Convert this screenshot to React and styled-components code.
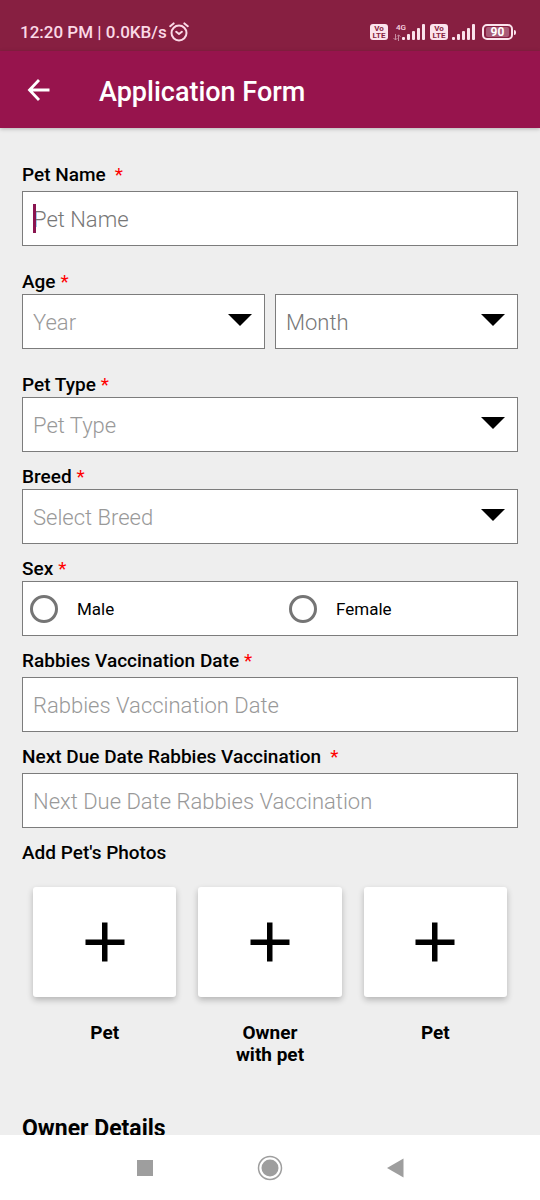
import React from "react";
import styled, { createGlobalStyle } from "styled-components";

const GlobalStyle = createGlobalStyle`
  *, *::before, *::after { box-sizing: border-box; }
  body {
    margin: 0;
    background: #eeeeee;
    color: #000;
    font-family: Roboto, "Liberation Sans", sans-serif;
  }
  button, input, select { font-family: inherit; }
`;

const Screen = styled.div`
  display: flex;
  flex-direction: column;
  height: 100vh;
  background: #eeeeee;
`;

/* ---------- status bar ---------- */

const StatusBar = styled.div`
  flex: none;
  display: flex;
  align-items: center;
  justify-content: space-between;
  height: 51px;
  padding: 13px 24px 0 20px;
  background: #871f41;
  color: #fbd9e6;
`;

const StatusGroup = styled.div`
  display: flex;
  align-items: center;
  gap: ${(p) => p.$gap}px;
`;

const StatusText = styled.span`
  font-size: 17px;
  line-height: 20px;
  font-weight: 500;
`;

const VolteBadge = styled.span`
  display: flex;
  flex-direction: column;
  align-items: center;
  justify-content: center;
  width: 18px;
  height: 16px;
  border-radius: 3px;
  background: #fbe3ec;
  color: #871f41;
  font-size: 8px;
  line-height: 7px;
  font-weight: 700;
`;

const SignalGroup = styled.div`
  display: flex;
  align-items: flex-end;
`;

const NetworkType = styled.div`
  display: flex;
  flex-direction: column;
  align-items: flex-start;
  gap: 2px;
  margin-right: -4px;
  font-size: 8px;
  line-height: 8px;
  font-weight: 500;
  span { padding-left: 4px; }
  svg { margin-left: 1px; }
`;

const Battery = styled.span`
  display: flex;
  align-items: center;
  gap: 1px;
  margin-left: 2px;
  &::after {
    content: "";
    width: 2px;
    height: 5px;
    border-radius: 0 2px 2px 0;
    background: #fbe3ec;
  }
`;

const BatteryBody = styled.span`
  display: flex;
  width: 31px;
  height: 16px;
  padding: 1px 2px;
  border: 2px solid #fbe3ec;
  border-radius: 5px;
`;

const BatteryLevel = styled.span`
  flex: 1;
  border-radius: 2px;
  background: #a85a76;
  color: #fff;
  font-size: 12px;
  line-height: 10px;
  font-weight: 700;
  text-align: center;
`;

/* ---------- app bar ---------- */

const AppBar = styled.header`
  flex: none;
  z-index: 1;
  display: flex;
  align-items: center;
  gap: 48px;
  height: 77px;
  padding: 0 26px;
  background: #97144d;
  color: #fff;
  box-shadow: 0 1px 4px rgba(0, 0, 0, 0.25);
`;

const BackButton = styled.button`
  display: flex;
  padding: 0;
  border: 0;
  background: none;
  color: inherit;
`;

const Title = styled.h1`
  margin: 0;
  padding-top: 4px;
  font-size: 27px;
  line-height: 32px;
  font-weight: 500;
`;

/* ---------- form ---------- */

const Content = styled.main`
  flex: 1;
  min-height: 0;
  overflow-y: auto;
  scrollbar-width: none;
`;

const Form = styled.form`
  display: flex;
  flex-direction: column;
  padding: 37px 22px 24px;
`;

const Field = styled.div`
  display: flex;
  flex-direction: column;
  gap: ${(p) => (p.$loose ? 6 : 2)}px;
  margin-bottom: ${(p) => (p.$spaced ? 26 : 15)}px;
`;

const Group = styled.fieldset`
  display: contents;
`;

const labelText = `
  padding: 0;
  margin: 0;
  font-size: 19px;
  line-height: 20px;
  font-weight: 500;
`;

const Label = styled.label`
  ${labelText}
`;

const Legend = styled.div`
  ${labelText}
`;

const Star = styled.span`
  margin-left: ${(p) => (p.$wide ? 9 : 5)}px;
  color: #f00;
  font-weight: 400;
`;

const Row = styled.div`
  display: grid;
  grid-template-columns: 1fr 1fr;
  gap: 10px;
`;

const Control = styled.div`
  position: relative;
  display: flex;
`;

const boxStyle = `
  width: 100%;
  height: 55px;
  border: 1px solid #7c7c7c;
  border-radius: 0;
  background: #fff;
`;

const TextInput = styled.input`
  ${boxStyle}
  padding: 2px 10px 0;
  font-size: 22px;
  font-weight: 350;
  outline: none;
  &::placeholder {
    color: ${(p) => (p.$dark ? "#777" : "#999")};
    opacity: 1;
  }
`;

const Caret = styled.span`
  position: absolute;
  left: 11px;
  top: 13px;
  width: 3px;
  height: 29px;
  background: #8a1550;
`;

const Select = styled.select`
  ${boxStyle}
  appearance: none;
  padding: 2px 40px 0 10px;
  color: ${(p) => (p.$dark ? "#777" : "#999")};
  font-size: 22px;
  font-weight: 350;
  outline: none;
`;

const Arrow = styled.svg`
  position: absolute;
  right: 13px;
  top: 20px;
  pointer-events: none;
`;

const RadioBox = styled.div`
  ${boxStyle}
  display: grid;
  grid-template-columns: 1fr 1fr;
  gap: 24px;
  align-items: center;
`;

const RadioLabel = styled.label`
  display: flex;
  align-items: center;
  gap: 19px;
  padding-left: 7px;
  font-size: 17px;
  line-height: 20px;
`;

const Radio = styled.input`
  appearance: none;
  width: 28px;
  height: 28px;
  margin: 0;
  border: 3px solid #757575;
  border-radius: 50%;
  &:checked {
    background: radial-gradient(#97144d 50%, #fff 55%);
  }
`;

const Photos = styled.div`
  display: grid;
  grid-template-columns: repeat(3, 1fr);
  gap: 22px;
  padding: 24px 11px 0;
`;

const Photo = styled.div`
  display: flex;
  flex-direction: column;
  align-items: center;
  gap: 25px;
`;

const PhotoButton = styled.button`
  display: flex;
  align-items: center;
  justify-content: center;
  width: 100%;
  height: 110px;
  padding: 0;
  border: 0;
  border-radius: 3px;
  background: #fff;
  box-shadow: 0 3px 6px rgba(0, 0, 0, 0.24);
`;

const Caption = styled.span`
  max-width: 80px;
  font-size: 19px;
  line-height: 22px;
  font-weight: 700;
  text-align: center;
`;

const SectionTitle = styled.h2`
  margin: 49px 0 0;
  font-size: 23px;
  line-height: 28px;
  font-weight: 700;
`;

/* ---------- navigation bar ---------- */

const NavBar = styled.nav`
  flex: none;
  display: grid;
  grid-template-columns: repeat(3, 125px);
  justify-content: center;
  height: 65px;
  background: #fff;
`;

const NavButton = styled.button`
  display: flex;
  align-items: center;
  justify-content: center;
  padding: 0;
  border: 0;
  background: none;
`;

function AlarmIcon() {
  return (
    <svg width="20" height="20" viewBox="0 0 20 20" fill="none" stroke="currentColor" strokeWidth="2" strokeLinecap="round" strokeLinejoin="round" aria-hidden="true">
      <circle cx="10" cy="11" r="7.5" />
      <path d="M7.2 9.800 10 12 12.900 9.800M1.2 4.2 4.6 1.4M18.8 4.2 15.4 1.4" />
    </svg>
  );
}

function Bars() {
  return (
    <svg width="24" height="17" viewBox="0 0 24 17" fill="#fbe3ec" aria-hidden="true">
      <rect x="0" y="13" width="3" height="3" rx="1" />
      <rect x="5" y="10" width="3" height="6" rx="1" />
      <rect x="10" y="7" width="3" height="9" rx="1" />
      <rect x="15" y="4" width="3" height="12" rx="1" />
      <rect x="20" y="0" width="3" height="16" rx="1" />
    </svg>
  );
}

function Volte() {
  return (
    <VolteBadge>
      <span>Vo</span>
      <span>LTE</span>
    </VolteBadge>
  );
}

function Required({ wide }) {
  return <Star $wide={wide}>*</Star>;
}

function TextField({ id, label, loose, spaced, wide, dark, caret }) {
  return (
    <Field $loose={loose} $spaced={spaced}>
      <Label htmlFor={id}>
        {label}
        <Required wide={wide} />
      </Label>
      <Control>
        <TextInput id={id} type="text" placeholder={label} $dark={dark} />
        {caret && <Caret />}
      </Control>
    </Field>
  );
}

function DropDown({ id, name, text, dark }) {
  return (
    <Control>
      <Select id={id} aria-label={name} $dark={dark}>
        <option>{text}</option>
      </Select>
      <Arrow width="24" height="12" viewBox="0 0 24 12" aria-hidden="true">
        <path d="M0 0h24L12 12z" />
      </Arrow>
    </Control>
  );
}

function PhotoTile({ caption }) {
  return (
    <Photo>
      <PhotoButton type="button" aria-label={`Add photo: ${caption}`}>
        <svg width="40" height="40" viewBox="0 0 40 40" aria-hidden="true">
          <path d="M17 .5h5.500v17h17v5.500h-17v16.500h-5.500v-16.500H.5v-5.500h16.500z" />
        </svg>
      </PhotoButton>
      <Caption>{caption}</Caption>
    </Photo>
  );
}

export default function App() {
  return (
    <Screen>
      <GlobalStyle />
      <StatusBar>
        <StatusGroup $gap={2}>
          <StatusText>12:20 PM | 0.0KB/s</StatusText>
          <AlarmIcon />
        </StatusGroup>
        <StatusGroup $gap={4}>
          <Volte />
          <SignalGroup>
            <NetworkType>
              <span>4G</span>
              <svg width="8" height="7" viewBox="0 0 8 7" fill="none" stroke="#c58a9f" aria-hidden="true">
                <path d="M2.5 0v6M.5 4l2 2 2-2M5.5 7V1M4 2.5 5.500 1 7.500 2.500" />
              </svg>
            </NetworkType>
            <Bars />
          </SignalGroup>
          <Volte />
          <Bars />
          <Battery>
            <BatteryBody>
              <BatteryLevel>90</BatteryLevel>
            </BatteryBody>
          </Battery>
        </StatusGroup>
      </StatusBar>

      <AppBar>
        <BackButton type="button" aria-label="Back">
          <svg width="25" height="24" viewBox="0 0 25 24" fill="none" stroke="currentColor" strokeWidth="2.8" aria-hidden="true">
            <path d="M23.500 12H4M13 2 3.500 12 13 22" />
          </svg>
        </BackButton>
        <Title>Application Form</Title>
      </AppBar>

      <Content>
        <Form>
          <TextField id="pet-name" label="Pet Name" loose spaced wide dark caret />

          <Field $spaced>
            <Label htmlFor="age-year">
              Age
              <Required />
            </Label>
            <Row>
              <DropDown id="age-year" name="Age, year" text="Year" />
              <DropDown id="age-month" name="Age, month" text="Month" dark />
            </Row>
          </Field>

          <Field>
            <Label htmlFor="pet-type">
              Pet Type
              <Required />
            </Label>
            <DropDown id="pet-type" text="Pet Type" />
          </Field>

          <Field>
            <Label htmlFor="breed">
              Breed
              <Required />
            </Label>
            <DropDown id="breed" text="Select Breed" />
          </Field>

          <Group aria-labelledby="sex-label">
            <Field>
              <Legend id="sex-label">
                Sex
                <Required />
              </Legend>
              <RadioBox>
                <RadioLabel>
                  <Radio type="radio" name="sex" value="male" />
                  Male
                </RadioLabel>
                <RadioLabel>
                  <Radio type="radio" name="sex" value="female" />
                  Female
                </RadioLabel>
              </RadioBox>
            </Field>
          </Group>

          <TextField id="vaccination" label="Rabbies Vaccination Date" loose />
          <TextField id="next-due" label="Next Due Date Rabbies Vaccination" loose wide />

          <Legend>Add Pet's Photos</Legend>
          <Photos>
            <PhotoTile caption="Pet" />
            <PhotoTile caption="Owner with pet" />
            <PhotoTile caption="Pet" />
          </Photos>

          <SectionTitle>Owner Details</SectionTitle>
        </Form>
      </Content>

      <NavBar>
        <NavButton type="button" aria-label="Recent apps">
          <svg width="16" height="16" aria-hidden="true">
            <rect width="16" height="16" fill="#9e9e9e" />
          </svg>
        </NavButton>
        <NavButton type="button" aria-label="Home">
          <svg width="26" height="26" viewBox="0 0 26 26" aria-hidden="true">
            <circle cx="13" cy="13" r="11.500" fill="none" stroke="#9e9e9e" strokeWidth="1.500" />
            <circle cx="13" cy="13" r="8.500" fill="#9e9e9e" />
          </svg>
        </NavButton>
        <NavButton type="button" aria-label="Back">
          <svg width="17" height="20" viewBox="0 0 17 20" aria-hidden="true">
            <path d="M16.500 .5v19L0 10z" fill="#9e9e9e" />
          </svg>
        </NavButton>
      </NavBar>
    </Screen>
  );
}
